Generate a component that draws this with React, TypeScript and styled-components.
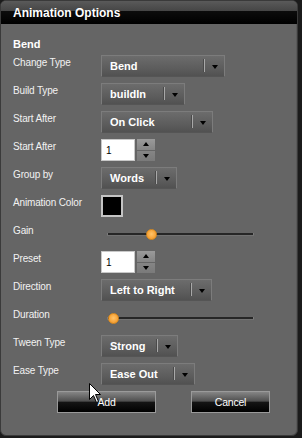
import React from "react";
import styled, { createGlobalStyle } from "styled-components";

const Global = createGlobalStyle`
  html, body { margin: 0; padding: 0; background: #1b1b1b; }
  body { font-family: "Liberation Sans", Arial, sans-serif; }
`;

const Panel = styled.div`
  position: relative;
  width: 298px;
  height: 436px;
  box-sizing: border-box;
  background: #656565;
  border: 1px solid #3a3a3a;
  border-radius: 6px;
  box-shadow: inset -1px 0 0 #5a5a5a;
  overflow: hidden;
  display: flex;
  flex-direction: column;
`;

const TitleBar = styled.div`
  height: 23px;
  flex: none;
  display: flex;
  align-items: center;
  padding-left: 12px;
  background: linear-gradient(to bottom, #5a5a5a 0%, #454545 44%, #0c0c0c 45%, #000 100%);
`;

const Title = styled.div`
  color: #fff;
  font-size: 12px;
  font-weight: bold;
  line-height: 14px;
`;

const Body = styled.div`
  display: flex;
  flex-direction: column;
  padding: 13px 0 0 12px;
`;

const Heading = styled.div`
  color: #fff;
  font-size: 11px;
  font-weight: bold;
  line-height: 14px;
  height: 14px;
  margin-bottom: 1px;
`;

const Row = styled.div`
  display: flex;
  align-items: center;
  height: 28px;
`;

const Label = styled.div`
  width: 88px;
  flex: none;
  align-self: flex-start;
  padding-top: 5px;
  color: #f2f2f2;
  font-size: 10px;
  line-height: 12px;
  letter-spacing: -0.15px;
`;

const Dropdown = styled.div<{ $w: number }>`
  width: ${(p) => p.$w}px;
  height: 22px;
  box-sizing: border-box;
  display: flex;
  align-items: stretch;
  border: 1px solid #7c7c7c;
  border-bottom-color: #555;
  background: linear-gradient(to bottom, #6c6c6c 0%, #5d5d5d 60%, #515151 100%);
`;

const DropValue = styled.div`
  flex: 1;
  display: flex;
  align-items: center;
  padding-left: 8px;
  color: #fff;
  font-size: 11px;
  font-weight: bold;
`;

const DropDivider = styled.div`
  width: 1px;
  margin: 3px 0 4px;
  background: #a8a8a8;
  box-shadow: -1px 0 0 #4a4a4a;
`;

const DropArrow = styled.div`
  width: 19px;
  display: flex;
  align-items: center;
  justify-content: center;
  &::after {
    content: "";
    border-left: 3px solid transparent;
    border-right: 3px solid transparent;
    border-top: 4px solid #000;
    margin-top: 1px;
  }
`;

const Spinner = styled.div`
  display: flex;
  align-items: stretch;
  height: 22px;
  gap: 2px;
`;

const SpinInput = styled.div`
  width: 34px;
  box-sizing: border-box;
  background: #fff;
  border: 1px solid #c8c8c8;
  color: #000;
  font-size: 10px;
  display: flex;
  align-items: center;
  padding-left: 4px;
`;

const SpinButtons = styled.div`
  width: 18px;
  display: flex;
  flex-direction: column;
  gap: 1px;
`;

const SpinBtn = styled.div<{ $up?: boolean }>`
  flex: 1;
  display: flex;
  align-items: center;
  justify-content: center;
  background: ${(p) =>
    p.$up
      ? "linear-gradient(to bottom, #9a9a9a, #858585)"
      : "linear-gradient(to bottom, #858585, #7a7a7a)"};
  &::after {
    content: "";
    border-left: 3px solid transparent;
    border-right: 3px solid transparent;
    ${(p) => (p.$up ? "border-bottom: 4px solid #000;" : "border-top: 4px solid #000;")}
  }
`;

const Swatch = styled.div`
  width: 22px;
  height: 22px;
  box-sizing: border-box;
  background: #000;
  border: 2px solid #c4c4c4;
`;

const Slider = styled.div`
  position: relative;
  width: 147px;
  height: 11px;
  margin-left: 6px;
  display: flex;
  align-items: center;
`;

const Track = styled.div`
  width: 100%;
  height: 2px;
  background: #262626;
  border-left: 1px solid #7a7a7a;
  border-right: 1px solid #7a7a7a;
  box-shadow: 0 1px 0 #727272;
`;

const Thumb = styled.div`
  position: absolute;
  top: 0;
  width: 11px;
  height: 11px;
  box-sizing: border-box;
  margin-left: -5px;
  border-radius: 50%;
  border: 1px solid #d98a1e;
  background: radial-gradient(circle at 50% 45%, #ffc46a 0%, #f7a43a 60%, #e8932a 100%);
`;

const ButtonRow = styled.div`
  display: flex;
  align-items: center;
  height: 28px;
  padding-left: 44px;
  gap: 35px;
`;

const Button = styled.div<{ $w: number }>`
  width: ${(p) => p.$w}px;
  height: 22px;
  box-sizing: border-box;
  border: 1px solid #9a9a9a;
  background: linear-gradient(to bottom, #858585 0%, #505050 45%, #141414 52%, #000 100%);
  color: #fff;
  font-size: 10.5px;
  display: flex;
  align-items: center;
  justify-content: center;
  letter-spacing: -0.2px;
`;

const Cursor = styled.svg`
  position: absolute;
  left: 88px;
  top: 382px;
`;

const Drop = ({ w, value }: { w: number; value: string }) => (
  <Dropdown $w={w}>
    <DropValue>{value}</DropValue>
    <DropDivider />
    <DropArrow />
  </Dropdown>
);

const Spin = ({ value }: { value: string }) => (
  <Spinner>
    <SpinInput>{value}</SpinInput>
    <SpinButtons>
      <SpinBtn $up />
      <SpinBtn />
    </SpinButtons>
  </Spinner>
);

const Range = ({ pct }: { pct: number }) => (
  <Slider>
    <Track />
    <Thumb style={{ left: `${pct}%` }} />
  </Slider>
);

export default function App() {
  return (
    <>
      <Global />
      <Panel>
        <TitleBar>
          <Title>Animation Options</Title>
        </TitleBar>
        <Body>
          <Heading>Bend</Heading>
          <Row>
            <Label>Change Type</Label>
            <Drop w={124} value="Bend" />
          </Row>
          <Row>
            <Label>Build Type</Label>
            <Drop w={84} value="buildIn" />
          </Row>
          <Row>
            <Label>Start After</Label>
            <Drop w={112} value="On Click" />
          </Row>
          <Row>
            <Label>Start After</Label>
            <Spin value="1" />
          </Row>
          <Row>
            <Label>Group by</Label>
            <Drop w={76} value="Words" />
          </Row>
          <Row>
            <Label>Animation Color</Label>
            <Swatch />
          </Row>
          <Row>
            <Label>Gain</Label>
            <Range pct={30} />
          </Row>
          <Row>
            <Label>Preset</Label>
            <Spin value="1" />
          </Row>
          <Row>
            <Label>Direction</Label>
            <Drop w={111} value="Left to Right" />
          </Row>
          <Row>
            <Label>Duration</Label>
            <Range pct={4} />
          </Row>
          <Row>
            <Label>Tween Type</Label>
            <Drop w={77} value="Strong" />
          </Row>
          <Row>
            <Label>Ease Type</Label>
            <Drop w={94} value="Ease Out" />
          </Row>
          <ButtonRow>
            <Button $w={99}>Add</Button>
            <Button $w={79}>Cancel</Button>
          </ButtonRow>
        </Body>
        <Cursor width="13" height="21" viewBox="0 0 13 21">
          <path
            d="M0.5 0.5 L0.5 16.5 L4.5 12.5 L7.5 19.5 L9.5 18.5 L6.5 11.5 L11.5 11.5 Z"
            fill="#fff"
            stroke="#000"
            strokeWidth="1"
            strokeLinejoin="miter"
          />
        </Cursor>
      </Panel>
    </>
  );
}
